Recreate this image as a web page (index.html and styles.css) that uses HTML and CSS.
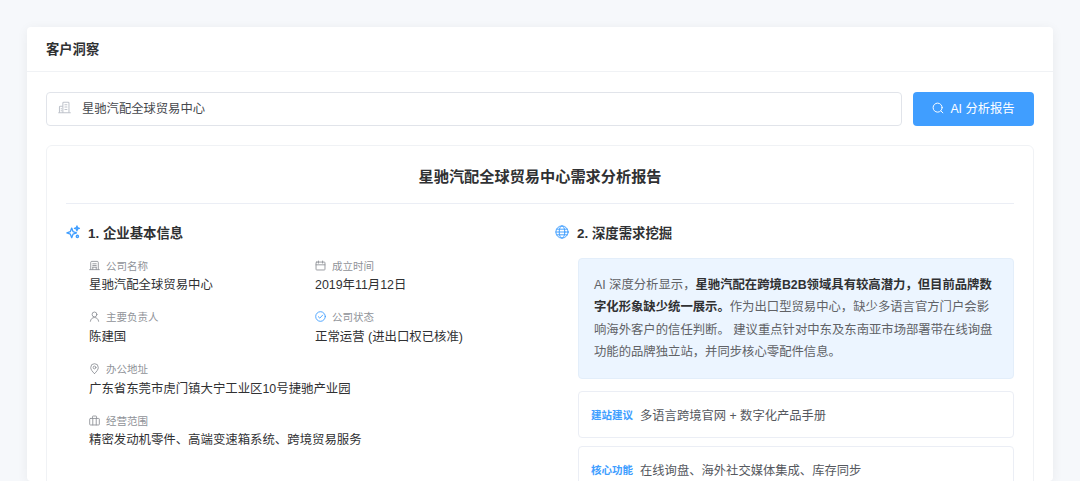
FILE: index.html
```html
<!DOCTYPE html>
<html lang="zh-CN">
<head>
<meta charset="utf-8">
<title>客户洞察</title>
<link rel="stylesheet" href="styles.css">
</head>
<body>
<main class="card">
  <header class="card-head">客户洞察</header>
  <div class="card-body">
    <div class="search-row">
      <div class="input">
        <svg class="ic input-ic" viewBox="0 0 16 16"><path d="M6 14.500V2.500a1 1 0 0 1 1-1h5.500a1 1 0 0 1 1 1v12M6 6.500H2.800a1 1 0 0 0-1 1v7M.8 14.500h14.400M8.500 4.500h2.500M8.500 7.500h2.500M8.500 10.500h2.500M3.800 9.500h.6M3.800 12h.6"/></svg>
        <span>星驰汽配全球贸易中心</span>
      </div>
      <button class="btn">
        <svg class="ic btn-ic" viewBox="0 0 16 16"><circle cx="7.500" cy="7.500" r="6"/><path d="M12 12 14.500 14.500"/></svg>
        <span>AI 分析报告</span>
      </button>
    </div>
    <section class="report">
      <h1 class="report-title">星驰汽配全球贸易中心需求分析报告</h1>
      <div class="cols">
        <div class="col-left">
          <h2 class="sec"><svg class="ic sec-ic star" viewBox="0 0 16 16"><path d="M6.500 3.500 8 7.500 12 9 8 10.500 6.500 14.500 5 10.500 1 9 5 7.500Z"/><path d="M12.500 1 13.200 3.100 15.300 3.800 13.200 4.500 12.500 6.600 11.800 4.500 9.700 3.800 11.800 3.100Z"/><circle cx="13" cy="13" r="1.300"/></svg>1. 企业基本信息</h2>
          <div class="grid">
            <div class="field">
              <div class="label"><svg class="ic l-ic" viewBox="0 0 16 16"><path d="M2.500 14V3.500a1.500 1.500 0 0 1 1.500-1.500h8a1.500 1.500 0 0 1 1.500 1.500V14M1 14h14M5.500 5.500h5M5.500 8h5M5.500 10.500h5M5.500 14v-3.500M10.500 14v-3.500"/></svg>公司名称</div>
              <div class="value">星驰汽配全球贸易中心</div>
            </div>
            <div class="field">
              <div class="label"><svg class="ic l-ic" viewBox="0 0 16 16"><rect x="1.500" y="3" width="13" height="11.500" rx="1"/><path d="M1.500 7h13M5 1.500v3M11 1.500v3"/></svg>成立时间</div>
              <div class="value">2019年11月12日</div>
            </div>
            <div class="field">
              <div class="label"><svg class="ic l-ic" viewBox="0 0 16 16"><circle cx="8" cy="5" r="3.500"/><path d="M2 15c.4-3.300 2.800-5.500 6-5.500s5.600 2.200 6 5.500"/></svg>主要负责人</div>
              <div class="value">陈建国</div>
            </div>
            <div class="field">
              <div class="label"><svg class="ic l-ic blue" viewBox="0 0 16 16"><circle cx="8" cy="8" r="7"/><path d="M4.800 8.200 7 10.400 11.200 5.900"/></svg>公司状态</div>
              <div class="value">正常运营 (进出口权已核准)</div>
            </div>
            <div class="field wide">
              <div class="label"><svg class="ic l-ic" viewBox="0 0 16 16"><path d="M8 15.500C4.500 12 2.500 9.500 2.500 6.500a5.500 5.500 0 0 1 11 0c0 3-2 5.500-5.500 9Z"/><circle cx="8" cy="6.500" r="2"/></svg>办公地址</div>
              <div class="value">广东省东莞市虎门镇大宁工业区10号捷驰产业园</div>
            </div>
            <div class="field wide">
              <div class="label"><svg class="ic l-ic" viewBox="0 0 16 16"><rect x="1" y="5" width="14" height="9.500" rx="1"/><path d="M5 5V2.500a1 1 0 0 1 1-1h4a1 1 0 0 1 1 1V5M5.500 5v9.500M10.500 5v9.500"/></svg>经营范围</div>
              <div class="value">精密发动机零件、高端变速箱系统、跨境贸易服务</div>
            </div>
          </div>
        </div>
        <div class="col-right">
          <h2 class="sec"><svg class="ic sec-ic" viewBox="0 0 16 16"><circle cx="8" cy="8" r="7"/><ellipse cx="8" cy="8" rx="3.200" ry="7"/><path d="M1 8h14"/><path d="M2 4.800h12M2 11.200h12"/></svg>2. 深度需求挖掘</h2>
          <div class="right-body">
            <p class="note">AI 深度分析显示，<strong>星驰汽配在跨境B2B领域具有较高潜力，但目前品牌数字化形象缺少统一展示。</strong>作为出口型贸易中心，缺少多语言官方门户会影响海外客户的信任判断。 建议重点针对中东及东南亚市场部署带在线询盘功能的品牌独立站，并同步核心零配件信息。</p>
            <div class="row"><span class="tag">建站建议</span><span class="row-text">多语言跨境官网 + 数字化产品手册</span></div>
            <div class="row"><span class="tag">核心功能</span><span class="row-text">在线询盘、海外社交媒体集成、库存同步</span></div>
          </div>
        </div>
      </div>
    </section>
  </div>
</main>
</body>
</html>
```
FILE: styles.css
```css
* { box-sizing: border-box; }
html, body { height: 100%; }
body {
  margin: 0;
  padding: 27px 27px 0;
  height: 481px;
  overflow: hidden;
  background: #f6f8fb;
  font-family: "Liberation Sans", "Noto Sans CJK SC", sans-serif;
  color: #303133;
}
.card {
  background: #fff;
  border-radius: 4px;
  box-shadow: 0 2px 12px rgba(0, 0, 0, 0.06);
  height: 454px;
  overflow: hidden;
}
.card-head {
  height: 45px;
  padding: 0 19px 2px;
  display: flex;
  align-items: center;
  font-size: 13.300px;
  font-weight: 700;
  color: #303133;
  border-bottom: 1px solid #f0f2f5;
}
.card-body { padding: 20px 19px; }
.search-row { display: flex; gap: 11px; }
.input {
  flex: 1;
  height: 34px;
  display: flex;
  align-items: center;
  gap: 11px;
  padding: 0 11px 3px;
  border: 1px solid #e1e4ea;
  border-radius: 4px;
  font-size: 12.300px;
  color: #46484d;
}
.ic {
  fill: none;
  stroke: currentColor;
  stroke-width: 1.300;
  stroke-linecap: round;
  stroke-linejoin: round;
  flex: none;
}
.input-ic { width: 13px; height: 13px; color: #c0c4cc; }
.btn {
  width: 121px;
  height: 34px;
  padding: 0 0 3px;
  border: 0;
  border-radius: 4px;
  background: #409eff;
  color: #fff;
  font: inherit;
  font-size: 12.300px;
  display: flex;
  align-items: center;
  justify-content: center;
  gap: 6px;
}
.btn-ic { width: 12px; height: 12px; }
.report {
  margin-top: 19px;
  border: 1px solid #f0f2f5;
  border-radius: 6px;
  padding: 0 19px;
  height: 400px;
}
.report-title {
  margin: 0;
  height: 58px;
  display: flex;
  align-items: center;
  justify-content: center;
  font-size: 15.200px;
  font-weight: 700;
  color: #303133;
  border-bottom: 1px solid #ebeef5;
}
.cols { display: flex; padding-top: 19px; }
.col-left { width: 489px; }
.col-right { flex: 1; }
.sec {
  margin: 0;
  height: 20px;
  padding-bottom: 2px;
  display: flex;
  align-items: center;
  gap: 8px;
  font-size: 13.400px;
  font-weight: 700;
  color: #303133;
}
.sec-ic { width: 14px; height: 14px; color: #409eff; stroke-width: 1.100; }
.star { stroke-width: 1.500; }
.grid {
  display: grid;
  grid-template-columns: 226px 1fr;
  row-gap: 14.300px;
  margin: 14px 0 0 23px;
}
.wide { grid-column: 1 / -1; }
.label {
  display: flex;
  align-items: center;
  gap: 6px;
  height: 16px;
  font-size: 10.500px;
  color: #909399;
}
.l-ic { width: 11px; height: 11px; gap: 5px; }
.blue { color: #409eff; }
.value {
  margin-top: 3.400px;
  height: 18px;
  line-height: 18px;
  font-size: 12.400px;
  color: #303133;
}
.right-body { margin: 15px 0 0 23px; }
.note {
  margin: 0;
  height: 121px;
  padding: 15px;
  background: #ecf5ff;
  border: 1px solid #e3eefa;
  border-radius: 4px;
  font-size: 12.350px;
  line-height: 22.300px;
  color: #606266;
}
.note strong { color: #303133; font-weight: 700; }
.row {
  margin-top: 8px;
  height: 47px;
  display: flex;
  align-items: center;
  gap: 7px;
  padding: 0 12px;
  border: 1px solid #ebeef5;
  border-radius: 4px;
}
.note + .row { margin-top: 12px; }
.tag { font-size: 10.500px; font-weight: 700; color: #409eff; }
.row-text { font-size: 12.300px; color: #55585e; }
```
